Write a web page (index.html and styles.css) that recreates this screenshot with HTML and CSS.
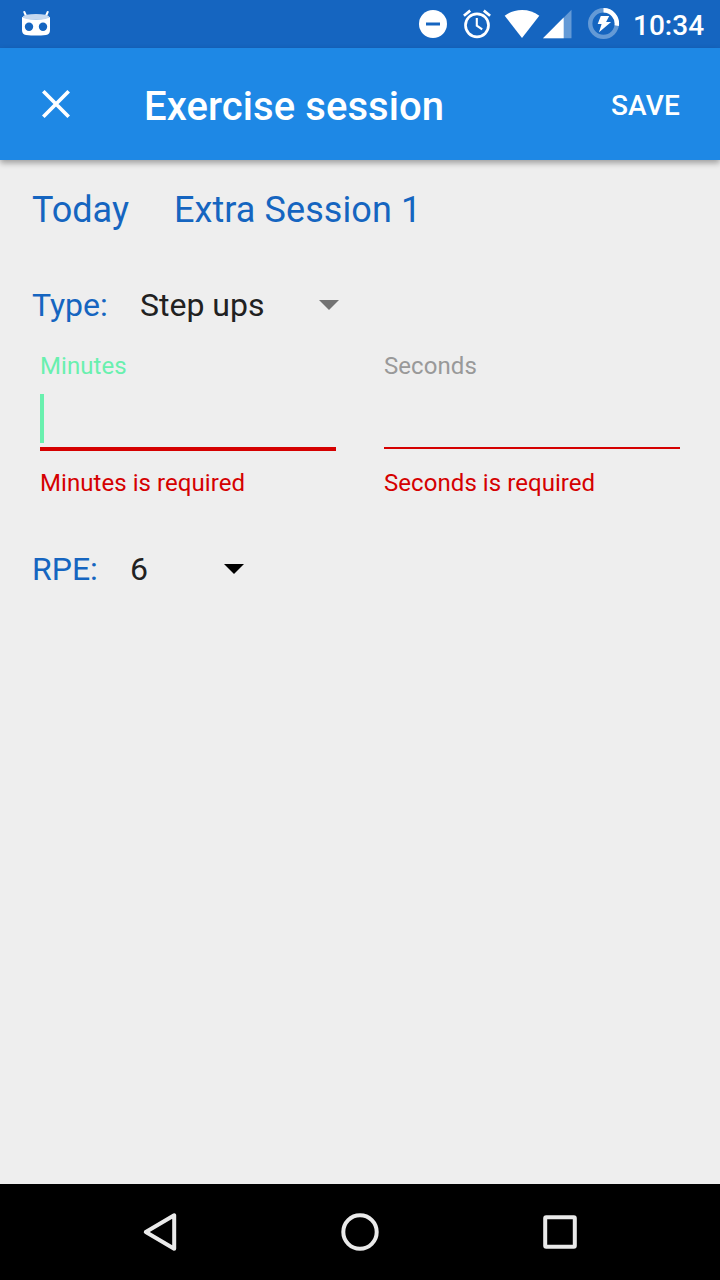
FILE: index.html
```html
<!DOCTYPE html>
<html lang="en">
<head>
<meta charset="utf-8">
<title>Exercise session</title>
<link rel="stylesheet" href="styles.css">
</head>
<body>
<div class="screen">
  <div class="status-bar">
    <svg class="robot" width="32" height="48" viewBox="20 0 32 48">
      <path d="M24.300 12l2 4.500M47.700 12l-2 4.500" stroke="#fff" stroke-width="2" stroke-linecap="round"/>
      <path d="M22 17Q36 22 50 17V30Q50 34.500 46 34.900Q36 35.900 26 34.900Q22 34.500 22 30Z" fill="#fff"/>
      <ellipse cx="36" cy="16.900" rx="13.200" ry="2.900" fill="#c5d8ef"/>
      <circle cx="29" cy="26.800" r="4.200" fill="#1565c0"/>
      <circle cx="43" cy="26.800" r="4.200" fill="#1565c0"/>
    </svg>
    <div class="status-icons">
      <svg width="28" height="48" viewBox="419 0 28 48">
        <circle cx="433" cy="24" r="14" fill="#fff"/>
        <path d="M426 24h14" stroke="#1565c0" stroke-width="3"/>
      </svg>
      <svg class="alarm" width="30" height="48" viewBox="462 0 30 48">
        <g fill="none" stroke="#fff">
          <circle cx="477" cy="25.300" r="11.500" stroke-width="2.700"/>
          <path d="M463.900 15.800l6.300-5.200M490.100 15.800l-6.300-5.200" stroke-width="2.700"/>
          <path d="M476.800 18v7.700l5.400 3.600" stroke-width="2.100"/>
        </g>
      </svg>
      <svg class="wifi" width="36" height="48" viewBox="504 0 36 48">
        <path d="M522 38L504.700 15.700Q512.200 10 522 10T539.300 15.700Z" fill="#fff"/>
      </svg>
      <svg class="signal" width="29" height="48" viewBox="543 0 29 48">
        <path d="M543 38.300L571.500 9.800V38.300Z" fill="#649ad6"/>
        <path d="M543 38.300L563.700 17.600V38.300Z" fill="#fff"/>
      </svg>
      <svg class="battery" width="33" height="48" viewBox="587 0 33 48">
        <g fill="none" stroke-width="4.400">
          <circle cx="603.500" cy="23.600" r="13.300" stroke="#649ad6"/>
          <path d="M603.500 10.300A13.300 13.300 0 0 1 616.700 25.700" stroke="#fff"/>
        </g>
        <path d="M600.800 16h8.400l-3.100 6h5L599 32.200l2.600-8.200h-3.900Z" fill="#fff"/>
      </svg>
      <span class="clock">10:34</span>
    </div>
  </div>

  <header class="app-bar">
    <svg class="close" width="28" height="28" viewBox="0 0 28 28">
      <path d="M1.300 1.300l25.400 25.400M26.700 1.300L1.300 26.700" stroke="#fff" stroke-width="3.700"/>
    </svg>
    <h1 class="title">Exercise session</h1>
    <span class="save">SAVE</span>
  </header>

  <main class="content">
    <div class="session">
      <span>Today</span>
      <span class="session-name">Extra Session 1</span>
    </div>
    <div class="row type-row">
      <span class="row-label">Type:</span>
      <span class="value">Step ups</span>
      <svg width="20" height="10" viewBox="0 0 20 10"><path d="M0 0h20L10 10Z" fill="#727272"/></svg>
    </div>
    <div class="fields">
      <div class="field focused">
        <span class="field-label">Minutes</span>
        <div class="input"><i class="caret"></i></div>
        <span class="error">Minutes is required</span>
      </div>
      <div class="field">
        <span class="field-label">Seconds</span>
        <div class="input"></div>
        <span class="error">Seconds is required</span>
      </div>
    </div>
    <div class="row rpe-row">
      <span class="row-label">RPE:</span>
      <span class="value">6</span>
      <svg width="20" height="10" viewBox="0 0 20 10"><path d="M0 0h20L10 10Z" fill="#000"/></svg>
    </div>
  </main>

  <nav class="nav-bar">
    <svg width="40" height="40" viewBox="140 1212 40 40"><path d="M145.800 1232L174.200 1215.300V1248.700Z"/></svg>
    <svg width="40" height="40" viewBox="340 1212 40 40"><circle cx="360" cy="1232" r="16.700"/></svg>
    <svg width="40" height="40" viewBox="540 1212 40 40"><rect x="545.200" y="1217.200" width="29.600" height="29.600" rx="1"/></svg>
  </nav>
</div>
</body>
</html>
```
FILE: styles.css
```css
* { box-sizing: border-box; }
body {
  margin: 0;
  background: #eee;
  font-family: Roboto, "Liberation Sans", sans-serif;
}
svg { display: block; flex: none; }
span { white-space: nowrap; }
.screen {
  display: flex;
  flex-direction: column;
  width: 720px;
  height: 1280px;
  overflow: hidden;
}
.status-bar {
  display: flex;
  justify-content: space-between;
  height: 48px;
  padding: 0 16px 0 20px;
  background: #1565c0;
}
.status-icons { display: flex; }
.alarm { margin-left: 15px; }
.wifi { margin-left: 12px; }
.signal { margin-left: 3px; }
.battery { margin-left: 15px; }
.clock {
  width: 71px;
  margin-left: 13px;
  color: #fff;
  font-size: 28px;
  font-weight: 500;
  line-height: 52px;
  text-align: right;
}
.app-bar {
  display: flex;
  align-items: center;
  flex: none;
  height: 112px;
  padding: 0 40px 0 42px;
  background: #1e88e5;
  box-shadow: 0 3px 6px rgba(0, 0, 0, .34);
  color: #fff;
}
.title {
  flex: 1;
  margin: 0 0 0 74px;
  padding-top: 6px;
  font-size: 40px;
  font-weight: 500;
  letter-spacing: .08px;
  line-height: 48px;
}
.save {
  padding-top: 4px;
  font-size: 28px;
  font-weight: 500;
  letter-spacing: .2px;
  line-height: 36px;
}
.content {
  flex: 1;
  padding: 26px 40px 0 32px;
}
.session {
  display: flex;
  gap: 45px;
  color: #1565c0;
  font-size: 36px;
  line-height: 48px;
}
.session-name { letter-spacing: .08px; }
.row {
  display: flex;
  align-items: center;
  height: 48px;
  font-size: 32px;
  line-height: 48px;
}
.row-label { color: #1565c0; }
.value { color: #212121; }
.type-row { margin-top: 47px; }
.type-row .row-label { width: 108px; }
.type-row .value { width: 179px; }
.rpe-row { margin-top: 49px; }
.rpe-row .row-label { width: 98px; }
.rpe-row .value { width: 94px; }
.fields {
  display: grid;
  grid-template-columns: 296px 296px;
  gap: 48px;
  margin: 24px 0 0 8px;
}
.field {
  display: flex;
  flex-direction: column;
  font-size: 24px;
  letter-spacing: .06px;
  line-height: 26px;
}
.field-label { color: #999; }
.focused .field-label { color: #69f0ae; }
.input {
  height: 70px;
  padding-top: 15px;
  border-bottom: 2px solid #d50000;
}
.focused .input {
  height: 72px;
  border-bottom-width: 4px;
}
.caret {
  display: block;
  width: 4px;
  height: 49px;
  background: #69f0ae;
}
.error {
  margin-top: 21px;
  color: #d50000;
}
.focused .error { margin-top: 19px; }
.nav-bar {
  display: flex;
  justify-content: center;
  align-items: center;
  gap: 160px;
  height: 96px;
  background: #000;
}
.nav-bar svg {
  fill: none;
  stroke: #eaeaea;
  stroke-width: 4px;
  stroke-linejoin: round;
}
```
